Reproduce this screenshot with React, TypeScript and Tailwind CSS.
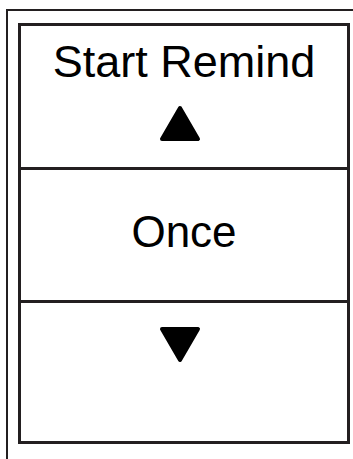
import React from "react";

function Tri({ down = false }: { down?: boolean }) {
  return (
    <svg width="42" height="37" viewBox="0 0 42 37" className="block">
      <polygon
        points={down ? "21,34 39,3 3,3" : "21,3 39,34 3,34"}
        fill="#000"
        stroke="#000"
        strokeWidth="4"
        strokeLinejoin="round"
      />
    </svg>
  );
}

export default function App() {
  return (
    <div
      className="w-[353px] h-[459px] overflow-hidden bg-white pl-[6px] pt-[9px]"
      style={{ fontFamily: '"Liberation Sans", Arial, sans-serif' }}
    >
      <div className="w-[400px] h-[500px] border-t-2 border-l-2 border-[#231f20] pl-[10px] pt-[12px]">
        <div className="w-[332px] h-[421px] border-[3px] border-[#231f20] flex flex-col text-black">
          <div className="h-[141px] flex flex-col items-center pt-[13px]">
            <div className="text-[45px] leading-[45px]">Start Remind</div>
            <div className="mt-[21px] mr-[8px]">
              <Tri />
            </div>
          </div>
          <div className="h-[3px] bg-[#231f20]" />
          <div className="h-[130px] flex items-center justify-center">
            <div className="text-[44px] leading-[44px] mb-[6px]">Once</div>
          </div>
          <div className="h-[3px] bg-[#231f20]" />
          <div className="h-[138px] flex flex-col items-center pt-[23px]">
            <div className="mr-[8px]">
              <Tri down />
            </div>
          </div>
        </div>
      </div>
    </div>
  );
}
